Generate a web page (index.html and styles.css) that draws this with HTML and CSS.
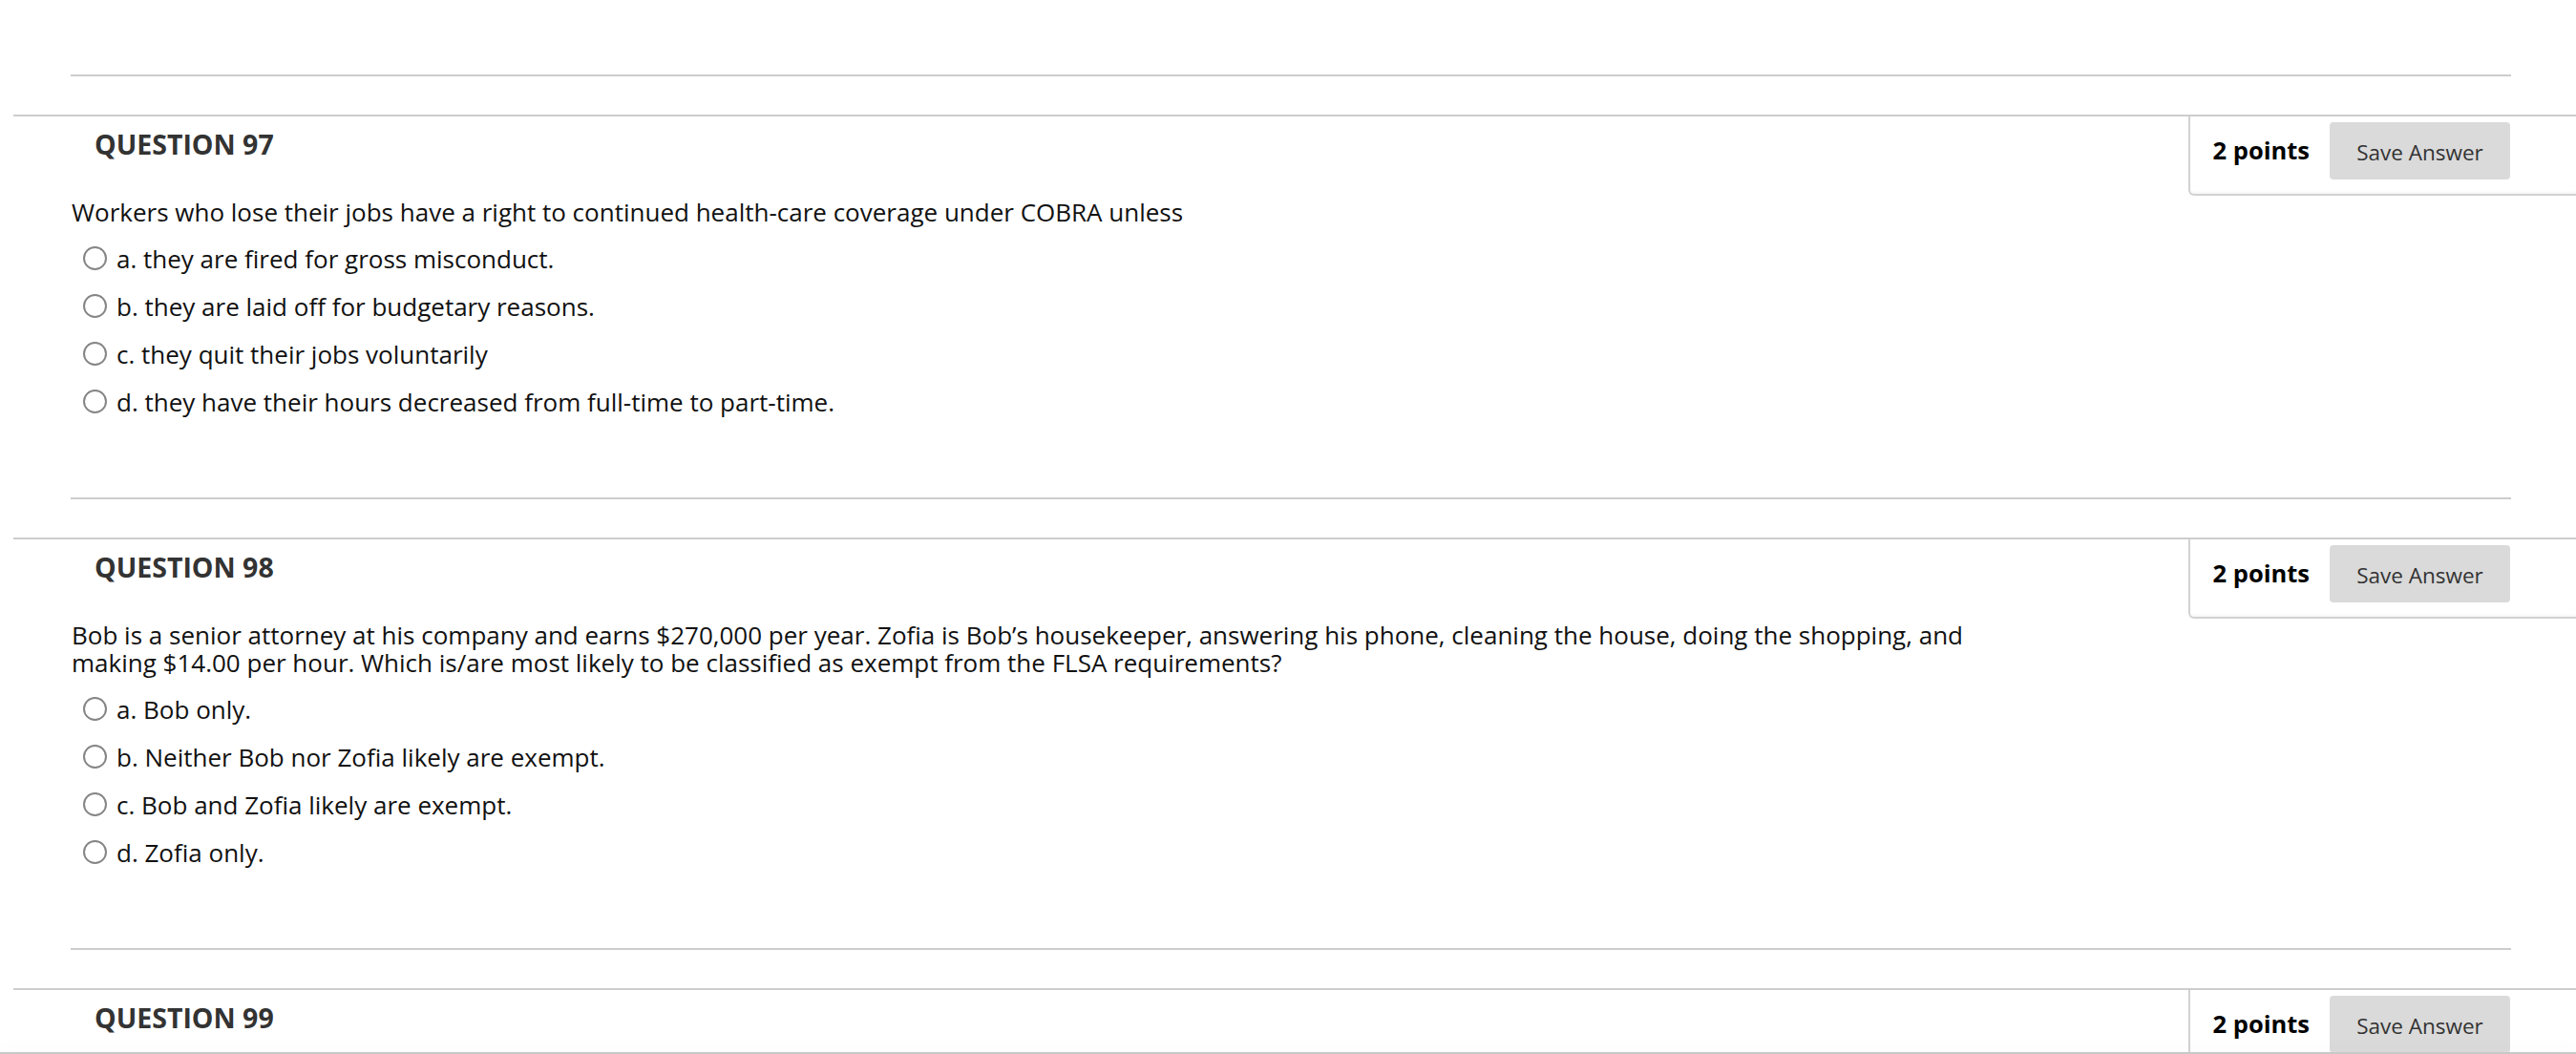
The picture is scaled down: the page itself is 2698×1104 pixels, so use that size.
FILE: index.html
```html
<!DOCTYPE html>
<html lang="en">
<head>
<meta charset="utf-8">
<title>Test</title>
<link rel="stylesheet" href="styles.css">
</head>
<body>
<div class="page">
  <hr class="sep">
  <div class="question">
    <div class="q-head">
      <h3 class="q-title">QUESTION 97</h3>
      <div class="points-box">
        <span class="points">2 points</span>
        <button class="save-btn" type="button">Save Answer</button>
      </div>
    </div>
    <div class="q-body">
      <p class="q-text">Workers who lose their jobs have a right to continued health-care coverage under COBRA unless</p>
      <ul class="options">
        <li class="option"><span class="radio"></span><span class="opt-label">a. they are fired for gross misconduct.</span></li>
        <li class="option"><span class="radio"></span><span class="opt-label">b. they are laid off for budgetary reasons.</span></li>
        <li class="option"><span class="radio"></span><span class="opt-label">c. they quit their jobs voluntarily</span></li>
        <li class="option"><span class="radio"></span><span class="opt-label">d. they have their hours decreased from full-time to part-time.</span></li>
      </ul>
    </div>
  </div>

  <hr class="sep">
  <div class="question">
    <div class="q-head">
      <h3 class="q-title">QUESTION 98</h3>
      <div class="points-box">
        <span class="points">2 points</span>
        <button class="save-btn" type="button">Save Answer</button>
      </div>
    </div>
    <div class="q-body">
      <p class="q-text">Bob is a senior attorney at his company and earns $270,000 per year. Zofia is Bob’s housekeeper, answering his phone, cleaning the house, doing the shopping, and making $14.00 per hour. Which is/are most likely to be classified as exempt from the FLSA requirements?</p>
      <ul class="options">
        <li class="option"><span class="radio"></span><span class="opt-label">a. Bob only.</span></li>
        <li class="option"><span class="radio"></span><span class="opt-label">b. Neither Bob nor Zofia likely are exempt.</span></li>
        <li class="option"><span class="radio"></span><span class="opt-label">c. Bob and Zofia likely are exempt.</span></li>
        <li class="option"><span class="radio"></span><span class="opt-label">d. Zofia only.</span></li>
      </ul>
    </div>
  </div>

  <hr class="sep">
  <div class="question">
    <div class="q-head">
      <h3 class="q-title">QUESTION 99</h3>
      <div class="points-box">
        <span class="points">2 points</span>
        <button class="save-btn" type="button">Save Answer</button>
      </div>
    </div>
  </div>
</div>
<div class="bottom-bar"></div>
</body>
</html>
```

FILE: styles.css
```css
html, body {
  margin: 0;
  padding: 0;
  background: #fff;
  overflow: hidden;
}
body {
  font-family: "Open Sans", "Liberation Sans", sans-serif;
  color: #111;
}
.page {
  padding-top: 78px;
}
.sep {
  border: 0;
  height: 2px;
  background: #cdcdcd;
  margin: 0 68px 40px 74px;
}
.question {
  margin-left: 14px;
  border-top: 2px solid #cdcdcd;
  padding-bottom: 76px;
}
.q-head {
  display: flex;
  align-items: flex-start;
  justify-content: space-between;
}
.q-title {
  margin: 0;
  padding: 10px 0 0 85px;
  font-size: 28.5px;
  line-height: 38px;
  font-weight: 700;
  color: #333;
}
.points-box {
  display: flex;
  align-items: flex-start;
  gap: 21px;
  height: 75px;
  box-sizing: content-box;
  padding: 6px 69px 0 24px;
  border-left: 2px solid #d2d2d2;
  border-bottom: 2px solid #d2d2d2;
  border-bottom-left-radius: 6px;
  box-shadow: inset 0 -3px 4px -3px rgba(0,0,0,0.08);
}
.points {
  font-size: 25.5px;
  font-weight: 700;
  color: #000;
  line-height: 58px;
}
.save-btn {
  width: 189px;
  height: 60px;
  border: 0;
  border-radius: 4px;
  background: #dadada;
  color: #333;
  font-family: "Open Sans", "Liberation Sans", sans-serif;
  font-size: 22.5px;
  padding: 0;
  padding-top: 2px;
}
.q-body {
  padding: 3px 0 0 61px;
}
.q-text {
  margin: 0;
  font-size: 26px;
  line-height: 29px;
  max-width: 2035px;
}
.options {
  list-style: none;
  margin: 8px 0 0;
  padding: 0 0 0 12px;
}
.option {
  display: flex;
  align-items: center;
  height: 50px;
  gap: 10px;
}
.radio {
  width: 21px;
  height: 21px;
  border: 2px solid #858585;
  border-radius: 50%;
  background: #fff;
  flex: none;
}
.opt-label {
  font-size: 26px;
  line-height: 29px;
  padding-top: 2px;
}
.bottom-bar {
  position: fixed;
  left: 0;
  right: 0;
  bottom: 0;
  height: 2px;
  background: #c8c8c8;
  box-shadow: 0 -6px 12px rgba(0,0,0,0.06);
}
```
